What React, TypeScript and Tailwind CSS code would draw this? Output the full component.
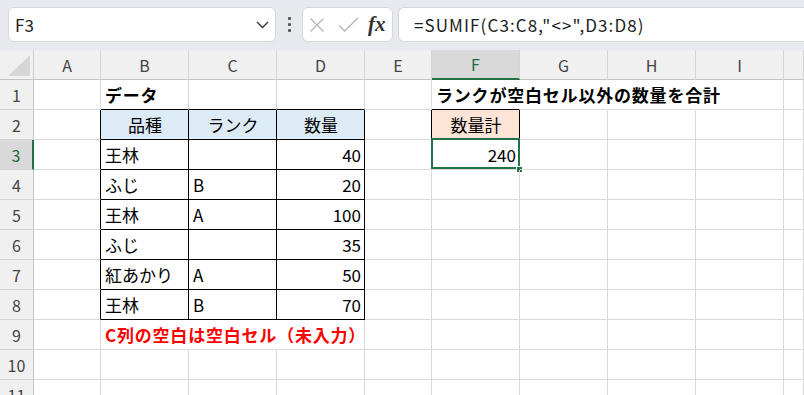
import React from "react";

type Spec = {
  text?: string;
  align?: "left" | "center" | "right";
  bold?: boolean;
  red?: boolean;
  fill?: "blue" | "peach";
  rB?: boolean;
  bB?: boolean;
  rNone?: boolean;
};

const COLS = ["A", "B", "C", "D", "E", "F", "G", "H", "I", "J"];

const data: Record<string, Spec> = {
  B1: { text: "データ", bold: true },
  F1: { text: "ランクが空白セル以外の数量を合計", bold: true },
  B2: { text: "品種", align: "center", fill: "blue" },
  C2: { text: "ランク", align: "center", fill: "blue" },
  D2: { text: "数量", align: "center", fill: "blue" },
  F2: { text: "数量計", align: "center", fill: "peach" },
  B3: { text: "王林" },
  D3: { text: "40", align: "right" },
  F3: { text: "240", align: "right" },
  B4: { text: "ふじ" },
  C4: { text: "B" },
  D4: { text: "20", align: "right" },
  B5: { text: "王林" },
  C5: { text: "A" },
  D5: { text: "100", align: "right" },
  B6: { text: "ふじ" },
  D6: { text: "35", align: "right" },
  B7: { text: "紅あかり" },
  C7: { text: "A" },
  D7: { text: "50", align: "right" },
  B8: { text: "王林" },
  C8: { text: "B" },
  D8: { text: "70", align: "right" },
  B9: { text: "C列の空白は空白セル（未入力）", bold: true, red: true },
};

function spec(col: string, row: number): Spec {
  const s: Spec = { ...(data[col + row] || {}) };
  const inTable = ["B", "C", "D"].includes(col) && row >= 2 && row <= 8;
  if (inTable) {
    s.rB = true;
    s.bB = true;
  }
  if (col === "A" && row >= 2 && row <= 8) s.rB = true;
  if (["B", "C", "D"].includes(col) && row === 1) s.bB = true;
  if (col === "E" && row === 2) s.rB = true;
  if (col === "F" && row === 1) s.bB = true;
  if (col === "F" && row === 2) {
    s.rB = true;
    s.bB = true;
  }
  if (row === 1 && ["F", "G", "H"].includes(col)) s.rNone = true;
  if (row === 9 && ["B", "C"].includes(col)) s.rNone = true;
  return s;
}

function Cell({ col, row }: { col: string; row: number }) {
  const s = spec(col, row);
  const rClass = s.rB
    ? "border-r-black"
    : s.rNone
    ? "border-r-transparent"
    : "border-r-[#dadada]";
  const bClass = s.bB ? "border-b-black" : "border-b-[#dadada]";
  const bg =
    s.fill === "blue"
      ? "bg-[#ddebf7]"
      : s.fill === "peach"
      ? "bg-[#fce4d6]"
      : "";
  const justify =
    s.align === "center"
      ? "justify-center"
      : s.align === "right"
      ? "justify-end"
      : "justify-start";
  const color = s.red ? "text-[#ff0000]" : "text-black";
  const weight = s.bold ? "font-bold tracking-[0.8px]" : "font-normal";
  const selected = col === "F" && row === 3;
  return (
    <div
      className={`relative h-[30px] border-r border-b ${rClass} ${bClass} ${bg} flex items-center ${justify} pl-[4px] pr-[3px] whitespace-nowrap overflow-visible text-[17px] leading-none ${color} ${weight}`}
    >
      {s.text && <span className="relative">{s.text}</span>}
      {selected && (
        <>
          <div className="absolute left-[-1px] top-[-2px] w-[89px] h-[31px] border-2 border-[#217346] pointer-events-none" />
          <div className="absolute left-[84px] top-[26px] w-[7px] h-[7px] bg-[#217346] border border-white" />
        </>
      )}
    </div>
  );
}

function HeaderRow() {
  return (
    <>
      <div className="relative h-[30px] border-r border-b border-r-[#cfcfcf] border-b-[#c4c4c4] bg-[#f0f0f0]">
        <svg className="absolute left-[8px] top-[5px]" width="22" height="21" viewBox="0 0 22 21">
          <polygon points="22,0 22,21 0,21" fill="#d6d6d6" />
        </svg>
      </div>
      {COLS.map((c) => {
        const sel = c === "F";
        return (
          <div
            key={c}
            className={`h-[30px] border-r border-r-[#d4d4d4] flex items-center justify-center text-[16px] ${
              sel
                ? "bg-[#d9d9d9] text-[#1e6b41] border-b-2 border-b-[#217346]"
                : "bg-[#f0f0f0] text-[#444444] border-b border-b-[#c4c4c4]"
            }`}
          >
            {c === "J" ? "" : c}
          </div>
        );
      })}
    </>
  );
}

function RowHeader({ row }: { row: number }) {
  const sel = row === 3;
  return (
    <div
      className={`h-[30px] border-b border-b-[#d4d4d4] flex items-center justify-center text-[16px] ${
        sel
          ? "bg-[#d9d9d9] text-[#1e6b41] border-r-2 border-r-[#217346]"
          : "bg-[#f0f0f0] text-[#444444] border-r border-r-[#c4c4c4]"
      }`}
    >
      {row}
    </div>
  );
}

export default function App() {
  const rows = Array.from({ length: 11 }, (_, i) => i + 1);
  return (
    <div className="w-[804px] h-[395px] overflow-hidden bg-white font-['Noto_Sans_CJK_JP','Noto_Sans',sans-serif]">
      {/* Toolbar */}
      <div className="h-[50px] bg-[#e7e9ee] flex items-start pt-[7px] pl-[8px] gap-0">
        <div className="w-[268px] h-[35px] bg-white rounded-[6px] border border-[#d5d7db] flex items-center pl-[6px] pr-[6px]">
          <span className="text-[17px] text-[#222222] flex-1">F3</span>
          <svg width="13" height="8" viewBox="0 0 13 8">
            <polyline points="1,1 6.5,6.5 12,1" fill="none" stroke="#333333" strokeWidth="1.3" />
          </svg>
        </div>
        <div className="w-[26px] h-[35px] flex flex-col items-center justify-center gap-[3px]">
          <div className="w-[3px] h-[3px] bg-[#555555] rounded-[1px]" />
          <div className="w-[3px] h-[3px] bg-[#555555] rounded-[1px]" />
          <div className="w-[3px] h-[3px] bg-[#555555] rounded-[1px]" />
        </div>
        <div className="w-[91px] h-[35px] bg-white rounded-[6px] border border-[#d5d7db] flex items-center pl-[6px]">
          <svg width="16" height="16" viewBox="0 0 16 16" className="ml-[0px]">
            <line x1="1.5" y1="1.5" x2="14.5" y2="14.5" stroke="#b5b5b5" strokeWidth="1.3" />
            <line x1="14.5" y1="1.5" x2="1.5" y2="14.5" stroke="#b5b5b5" strokeWidth="1.3" />
          </svg>
          <svg width="21" height="16" viewBox="0 0 21 16" className="ml-[13px]">
            <polyline points="1,8.5 6.5,14 20,1" fill="none" stroke="#b5b5b5" strokeWidth="1.3" />
          </svg>
          <span className="ml-[9px] text-[21px] italic font-bold text-[#333333] font-['Liberation_Serif',serif] leading-none">
            fx
          </span>
        </div>
        <div className="ml-[5px] flex-1 h-[35px] bg-white rounded-l-[6px] border border-r-0 border-[#d5d7db] flex items-center pl-[15px]">
          <span className="text-[17px] text-[#222222] tracking-[1.1px]">
            =SUMIF(C3:C8,"&lt;&gt;",D3:D8)
          </span>
        </div>
      </div>
      {/* Sheet */}
      <div className="grid grid-cols-[34px_67px_88px_88px_88px_67px_88px_88px_88px_88px_1fr]">
        <HeaderRow />
        {rows.map((r) => (
          <React.Fragment key={r}>
            <RowHeader row={r} />
            {COLS.map((c) => (
              <Cell key={c + r} col={c} row={r} />
            ))}
          </React.Fragment>
        ))}
      </div>
    </div>
  );
}
